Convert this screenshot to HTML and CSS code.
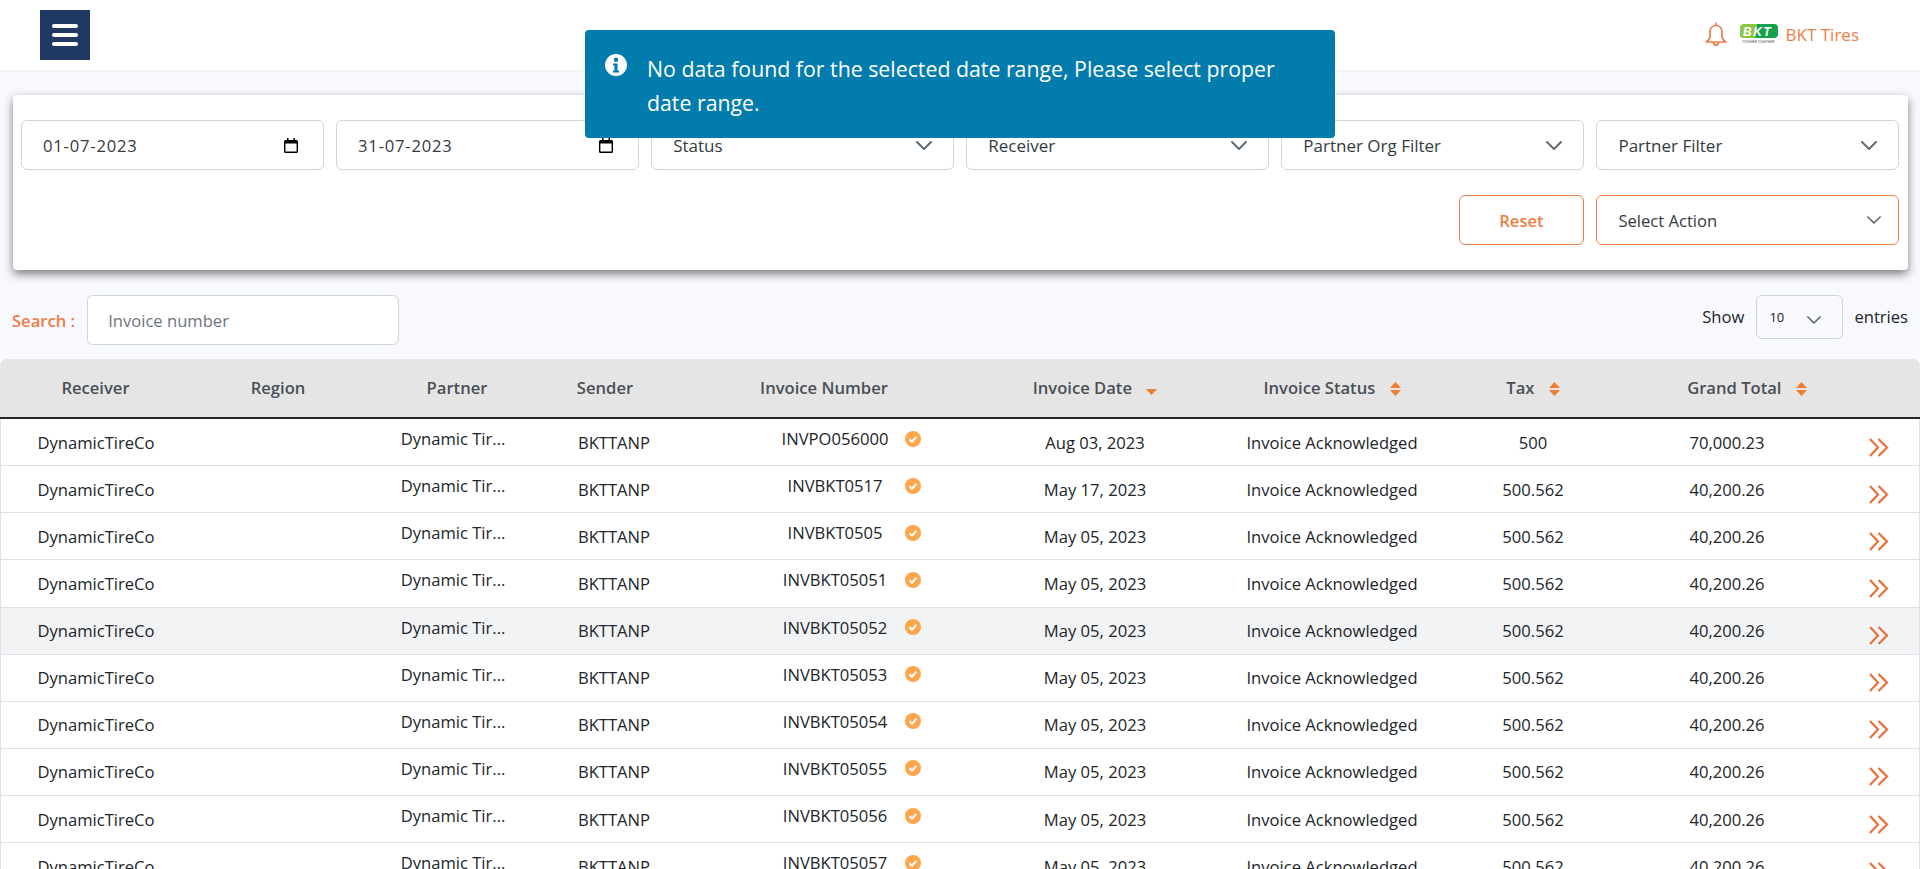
FILE: index.html
```html
<!DOCTYPE html>
<html lang="en">

<head>
    <meta charset="UTF-8" />
    <meta name="viewport" content="width=device-width, initial-scale=1.0" />
    <title>Invoices</title>
    <link rel="stylesheet" href="styles.css">
</head>

<body>
    <svg class="icon-defs" width="0" height="0">
        <symbol id="chevron" viewBox="0 0 16 9">
            <path d="M1 1l7 7 7-7" fill="none" stroke="currentColor" stroke-width="1.8" stroke-linecap="round" stroke-linejoin="round" />
        </symbol>
        <symbol id="calendar" viewBox="0 0 14 15">
            <path d="M3 0h1.5v2h5V0H11v2h1.5A1.5 1.5 0 0 1 14 3.500v10a1.500 1.500 0 0 1-1.500 1.500h-11A1.500 1.500 0 0 1 0 13.500v-10A1.500 1.500 0 0 1 1.500 2H3zM1.400 5.500v8h11.200v-8z" fill="currentColor" />
        </symbol>
        <symbol id="sort" viewBox="0 0 11 14">
            <path d="M5.500 0L11 6H0zM5.500 14L0 8h11z" fill="currentColor" />
        </symbol>
        <symbol id="check" viewBox="0 0 16 16">
            <circle cx="8" cy="8" r="8" fill="#ffa64d" />
            <path d="M4.500 8.200l2.500 2.500 4.500-5" fill="none" stroke="#fff" stroke-width="2" />
        </symbol>
        <symbol id="double-chevron" viewBox="0 0 20 19">
            <path d="M1 1l8 8.500-8 8.500M9.500 1l8.500 8.500-8.500 8.500" fill="none" stroke="currentColor" stroke-width="2.200" />
        </symbol>
    </svg>

    <header class="top-bar">
        <button class="menu-btn" aria-label="Menu">
            <span></span><span></span><span></span>
        </button>
        <h1 class="page-title">Invoices</h1>
        <div class="account">
            <svg class="bell" viewBox="0 0 22 24" width="22" height="24">
                <path d="M11 3.500c-4 0-6 3-6 6.500v4.500c0 2.500-1.500 4-3.800 5.500h19.600c-2.300-1.500-3.800-3-3.800-5.500V10c0-3.500-2-6.500-6-6.500zM11 3.500V1.200M8.500 20.500c0 3.500 5 3.500 5 0" fill="none" stroke="currentColor" stroke-width="1.700" stroke-linejoin="round" stroke-linecap="round" />
            </svg>
            <svg class="logo" viewBox="0 0 38 20" width="38" height="20">
                <path d="M4 0h13l-2 14H3a3 3 0 0 1-3-3V4a4 4 0 0 1 4-4z" fill="#8cc63f" />
                <path d="M17 0h17a4 4 0 0 1 4 4v6a4 4 0 0 1-4 4H15z" fill="#13a14b" />
                <text x="3" y="11.500" class="logo-mark">BKT</text>
                <text x="2" y="19" class="logo-tag">TOUGHER TOGETHER</text>
            </svg>
            <span class="account-name">BKT Tires</span>
        </div>
    </header>

    <div class="toast">
        <svg class="toast-icon" viewBox="0 0 22 22" width="22" height="22">
            <circle cx="11" cy="11" r="11" fill="#fff" />
            <circle cx="11" cy="5.800" r="2.200" fill="#027bad" />
            <path d="M8 9.500h4.500v7H14v2H8v-2h1.500v-5H8z" fill="#027bad" />
        </svg>
        <p>No data found for the selected date range, Please select proper date range.</p>
    </div>

    <main class="content">
        <section class="filter-card">
            <div class="filter-grid">
                <div class="field">
                    <span class="date-text">01-07-2023</span>
                    <svg class="calendar" width="14" height="15"><use href="#calendar" /></svg>
                </div>
                <div class="field">
                    <span class="date-text">31-07-2023</span>
                    <svg class="calendar" width="14" height="15"><use href="#calendar" /></svg>
                </div>
                <div class="field">
                    <span>Status</span>
                    <svg class="chevron" width="16" height="9"><use href="#chevron" /></svg>
                </div>
                <div class="field">
                    <span>Receiver</span>
                    <svg class="chevron" width="16" height="9"><use href="#chevron" /></svg>
                </div>
                <div class="field">
                    <span>Partner Org Filter</span>
                    <svg class="chevron" width="16" height="9"><use href="#chevron" /></svg>
                </div>
                <div class="field">
                    <span>Partner Filter</span>
                    <svg class="chevron" width="16" height="9"><use href="#chevron" /></svg>
                </div>
                <button class="reset-btn">Reset</button>
                <div class="field field-action">
                    <span>Select Action</span>
                    <svg class="chevron chevron-small" width="14" height="8"><use href="#chevron" /></svg>
                </div>
            </div>
        </section>

        <div class="table-tools">
            <label class="search">
                <span class="search-label">Search :</span>
                <input class="search-input" type="text" placeholder="Invoice number">
            </label>
            <div class="page-size">
                <span>Show</span>
                <div class="size-select">
                    <span>10</span>
                    <svg class="chevron" width="14" height="8"><use href="#chevron" /></svg>
                </div>
                <span>entries</span>
            </div>
        </div>

        <table class="invoice-table">
            <colgroup>
                <col class="col-receiver">
                <col class="col-region">
                <col class="col-partner">
                <col class="col-sender">
                <col class="col-number">
                <col class="col-date">
                <col class="col-status">
                <col class="col-tax">
                <col class="col-total">
                <col>
            </colgroup>
            <thead>
                <tr>
                    <th>Receiver</th>
                    <th>Region</th>
                    <th>Partner</th>
                    <th>Sender</th>
                    <th>Invoice Number</th>
                    <th>Invoice Date <svg class="sort sort-down" width="11" height="6" viewBox="0 0 11 6"><path d="M0 0h11L5.500 6z" fill="currentColor" /></svg></th>
                    <th>Invoice Status <svg class="sort" width="11" height="14"><use href="#sort" /></svg></th>
                    <th>Tax <svg class="sort" width="11" height="14"><use href="#sort" /></svg></th>
                    <th class="total-head">Grand Total <svg class="sort" width="11" height="14"><use href="#sort" /></svg></th>
                    <th></th>
                </tr>
            </thead>
            <tbody>
                <tr>
                    <td>DynamicTireCo</td><td></td>
                    <td class="partner-cell"><span class="raised">Dynamic Tir...</span></td>
                    <td class="sender-cell">BKTTANP</td>
                    <td><div class="number-cell"><span class="raised">INVPO056000</span><svg class="raised" width="16" height="16"><use href="#check" /></svg></div></td>
                    <td>Aug 03, 2023</td><td>Invoice Acknowledged</td><td>500</td><td>70,000.23</td>
                    <td><svg class="row-link" width="20" height="19"><use href="#double-chevron" /></svg></td>
                </tr>
                <tr>
                    <td>DynamicTireCo</td><td></td>
                    <td class="partner-cell"><span class="raised">Dynamic Tir...</span></td>
                    <td class="sender-cell">BKTTANP</td>
                    <td><div class="number-cell"><span class="raised">INVBKT0517</span><svg class="raised" width="16" height="16"><use href="#check" /></svg></div></td>
                    <td>May 17, 2023</td><td>Invoice Acknowledged</td><td>500.562</td><td>40,200.26</td>
                    <td><svg class="row-link" width="20" height="19"><use href="#double-chevron" /></svg></td>
                </tr>
                <tr>
                    <td>DynamicTireCo</td><td></td>
                    <td class="partner-cell"><span class="raised">Dynamic Tir...</span></td>
                    <td class="sender-cell">BKTTANP</td>
                    <td><div class="number-cell"><span class="raised">INVBKT0505</span><svg class="raised" width="16" height="16"><use href="#check" /></svg></div></td>
                    <td>May 05, 2023</td><td>Invoice Acknowledged</td><td>500.562</td><td>40,200.26</td>
                    <td><svg class="row-link" width="20" height="19"><use href="#double-chevron" /></svg></td>
                </tr>
                <tr>
                    <td>DynamicTireCo</td><td></td>
                    <td class="partner-cell"><span class="raised">Dynamic Tir...</span></td>
                    <td class="sender-cell">BKTTANP</td>
                    <td><div class="number-cell"><span class="raised">INVBKT05051</span><svg class="raised" width="16" height="16"><use href="#check" /></svg></div></td>
                    <td>May 05, 2023</td><td>Invoice Acknowledged</td><td>500.562</td><td>40,200.26</td>
                    <td><svg class="row-link" width="20" height="19"><use href="#double-chevron" /></svg></td>
                </tr>
                <tr class="row-hover">
                    <td>DynamicTireCo</td><td></td>
                    <td class="partner-cell"><span class="raised">Dynamic Tir...</span></td>
                    <td class="sender-cell">BKTTANP</td>
                    <td><div class="number-cell"><span class="raised">INVBKT05052</span><svg class="raised" width="16" height="16"><use href="#check" /></svg></div></td>
                    <td>May 05, 2023</td><td>Invoice Acknowledged</td><td>500.562</td><td>40,200.26</td>
                    <td><svg class="row-link" width="20" height="19"><use href="#double-chevron" /></svg></td>
                </tr>
                <tr>
                    <td>DynamicTireCo</td><td></td>
                    <td class="partner-cell"><span class="raised">Dynamic Tir...</span></td>
                    <td class="sender-cell">BKTTANP</td>
                    <td><div class="number-cell"><span class="raised">INVBKT05053</span><svg class="raised" width="16" height="16"><use href="#check" /></svg></div></td>
                    <td>May 05, 2023</td><td>Invoice Acknowledged</td><td>500.562</td><td>40,200.26</td>
                    <td><svg class="row-link" width="20" height="19"><use href="#double-chevron" /></svg></td>
                </tr>
                <tr>
                    <td>DynamicTireCo</td><td></td>
                    <td class="partner-cell"><span class="raised">Dynamic Tir...</span></td>
                    <td class="sender-cell">BKTTANP</td>
                    <td><div class="number-cell"><span class="raised">INVBKT05054</span><svg class="raised" width="16" height="16"><use href="#check" /></svg></div></td>
                    <td>May 05, 2023</td><td>Invoice Acknowledged</td><td>500.562</td><td>40,200.26</td>
                    <td><svg class="row-link" width="20" height="19"><use href="#double-chevron" /></svg></td>
                </tr>
                <tr>
                    <td>DynamicTireCo</td><td></td>
                    <td class="partner-cell"><span class="raised">Dynamic Tir...</span></td>
                    <td class="sender-cell">BKTTANP</td>
                    <td><div class="number-cell"><span class="raised">INVBKT05055</span><svg class="raised" width="16" height="16"><use href="#check" /></svg></div></td>
                    <td>May 05, 2023</td><td>Invoice Acknowledged</td><td>500.562</td><td>40,200.26</td>
                    <td><svg class="row-link" width="20" height="19"><use href="#double-chevron" /></svg></td>
                </tr>
                <tr>
                    <td>DynamicTireCo</td><td></td>
                    <td class="partner-cell"><span class="raised">Dynamic Tir...</span></td>
                    <td class="sender-cell">BKTTANP</td>
                    <td><div class="number-cell"><span class="raised">INVBKT05056</span><svg class="raised" width="16" height="16"><use href="#check" /></svg></div></td>
                    <td>May 05, 2023</td><td>Invoice Acknowledged</td><td>500.562</td><td>40,200.26</td>
                    <td><svg class="row-link" width="20" height="19"><use href="#double-chevron" /></svg></td>
                </tr>
                <tr>
                    <td>DynamicTireCo</td><td></td>
                    <td class="partner-cell"><span class="raised">Dynamic Tir...</span></td>
                    <td class="sender-cell">BKTTANP</td>
                    <td><div class="number-cell"><span class="raised">INVBKT05057</span><svg class="raised" width="16" height="16"><use href="#check" /></svg></div></td>
                    <td>May 05, 2023</td><td>Invoice Acknowledged</td><td>500.562</td><td>40,200.26</td>
                    <td><svg class="row-link" width="20" height="19"><use href="#double-chevron" /></svg></td>
                </tr>
            </tbody>
        </table>
    </main>
</body>

</html>
```

FILE: styles.css
```css
html,
body {
    height: 100%;
    overflow: hidden;
}

body {
    margin: 0;
    font-family: 'Open Sans', 'Noto Sans', sans-serif;
    font-size: 16.6px;
    color: #212529;
    background: #f8f9ff;
}

.icon-defs {
    position: absolute;
}

/* top bar */
.top-bar {
    height: 70px;
    box-sizing: border-box;
    padding: 10px 61px 0 40px;
    display: flex;
    justify-content: space-between;
    align-items: flex-start;
    background: #ffffff;
    box-shadow: 0 1px 4px rgba(0, 0, 0, 0.06);
}

.menu-btn {
    width: 50px;
    height: 50px;
    padding: 0 12px;
    border: 0;
    background: #1f3864;
    display: flex;
    flex-direction: column;
    justify-content: center;
    gap: 5px;
}

.menu-btn span {
    display: block;
    height: 4px;
    border-radius: 2px;
    background: #ffffff;
}

.page-title {
    margin: 12px 0 0 0;
    font-size: 24px;
    font-weight: 700;
    color: #212529;
}

.account {
    display: flex;
    align-items: center;
    gap: 8px;
    margin-top: 12px;
    color: #ed7d45;
}

.bell {
    margin-right: 5px;
}

.logo-mark {
    font-family: 'Liberation Sans', sans-serif;
    font-size: 12px;
    font-weight: 700;
    font-style: italic;
    letter-spacing: 1.5px;
    fill: #ffffff;
}

.logo-tag {
    font-family: 'Liberation Sans', sans-serif;
    font-size: 3px;
    fill: #444444;
}

.account-name {
    font-size: 17px;
}

/* notification */
.toast {
    position: absolute;
    top: 30px;
    left: 585px;
    width: 750px;
    height: 108px;
    box-sizing: border-box;
    padding: 20px 40px 0 20px;
    display: flex;
    gap: 20px;
    border-radius: 4px;
    background: #027bad;
    color: #ffffff;
}

.toast-icon {
    flex: none;
    margin-top: 4px;
}

.toast p {
    margin: 2px 0 0 0;
    font-size: 21.3px;
    line-height: 34px;
}

/* filters */
.content {
    padding-top: 25px;
}

.filter-card {
    margin: 0 12px 0 13px;
    height: 175px;
    box-sizing: border-box;
    padding: 25px 9px 0 8px;
    border-radius: 4px;
    background: #ffffff;
    box-shadow: 0 4px 10px rgba(0, 0, 0, 0.5);
}

.filter-grid {
    display: grid;
    grid-template-columns: repeat(6, 1fr);
    column-gap: 12.5px;
    row-gap: 25px;
}

.field {
    height: 50px;
    box-sizing: border-box;
    padding: 0 21px;
    display: flex;
    align-items: center;
    justify-content: space-between;
    border: 1px solid #ced4da;
    border-radius: 6px;
    background: #ffffff;
    color: #343a40;
    font-size: 17px;
}

.date-text {
    font-size: 16.6px;
    letter-spacing: 0.8px;
}

.calendar {
    color: #000000;
    margin-right: 4px;
}

.chevron {
    color: #5c6670;
}

.reset-btn {
    grid-column: 5;
    justify-self: end;
    width: 125px;
    height: 50px;
    border: 1px solid #ed7d45;
    border-radius: 6px;
    background: #ffffff;
    color: #ed7d45;
    font-family: inherit;
    font-size: 16.6px;
    font-weight: 600;
}

.field-action {
    border-color: #ed7d45;
    padding-right: 17px;
    font-size: 16.6px;
}

/* search + page size */
.table-tools {
    display: flex;
    justify-content: space-between;
    padding: 25px 12px 14px 12px;
}

.search {
    display: flex;
    align-items: center;
    gap: 12px;
}

.search-label {
    color: #ed7d45;
    font-weight: 600;
}

.search-input {
    width: 312px;
    height: 50px;
    box-sizing: border-box;
    padding: 0 20px;
    border: 1px solid #ced4da;
    border-radius: 6px;
    font-family: inherit;
    font-size: 16.6px;
}

.search-input::placeholder {
    color: #6c757d;
}

.page-size {
    display: flex;
    align-items: flex-start;
    gap: 12px;
    line-height: 44px;
}

.size-select {
    width: 87px;
    height: 44px;
    margin-right: -1px;
    box-sizing: border-box;
    padding: 0 21px 0 12px;
    display: flex;
    align-items: center;
    justify-content: space-between;
    border: 1px solid #ced4da;
    border-radius: 6px;
    font-size: 13px;
}

.size-select .chevron {
    margin-top: 6px;
}

/* table */
.invoice-table {
    width: 100%;
    table-layout: fixed;
    border-collapse: separate;
    border-spacing: 0;
    background: #ffffff;
}

.col-receiver { width: 191px; }
.col-region { width: 174px; }
.col-partner { width: 184px; }
.col-sender { width: 112px; }
.col-number { width: 326px; }
.col-date { width: 216px; }
.col-status { width: 258px; }
.col-tax { width: 144px; }
.col-total { width: 244px; }

.invoice-table th {
    height: 60px;
    box-sizing: border-box;
    padding: 0 0 2px 0;
    font-weight: 600;
    color: #495057;
    background: #e5e5e5;
    border-bottom: 2px solid #212529;
}

.invoice-table th:first-child {
    border-top-left-radius: 6px;
}

.invoice-table th:last-child {
    border-top-right-radius: 6px;
}

.invoice-table th.total-head {
    padding-left: 40px;
}

.invoice-table td {
    height: 46.14px;
    padding: 0;
    text-align: center;
    border-bottom: 1px solid #dee2e6;
}

.invoice-table td:first-child {
    border-left: 1px solid #dee2e6;
}

.invoice-table td:last-child {
    border-right: 1px solid #dee2e6;
    text-align: left;
    padding-left: 20px;
}

.invoice-table td.partner-cell {
    padding-right: 8px;
}

.invoice-table td.sender-cell {
    padding-left: 18px;
}

.row-hover td {
    background: #f2f3f5;
}

.sort {
    color: #ed7d31;
    margin-left: 10px;
    vertical-align: -2px;
}

.sort-down {
    vertical-align: -1px;
}

.raised {
    display: block;
    margin-bottom: 7px;
}

.number-cell {
    padding-left: 109px;
    display: flex;
    align-items: center;
}

.number-cell span {
    width: 130px;
    margin-right: 5px;
}

.row-link {
    display: block;
    margin-top: 10px;
    color: #e8703a;
}
```
